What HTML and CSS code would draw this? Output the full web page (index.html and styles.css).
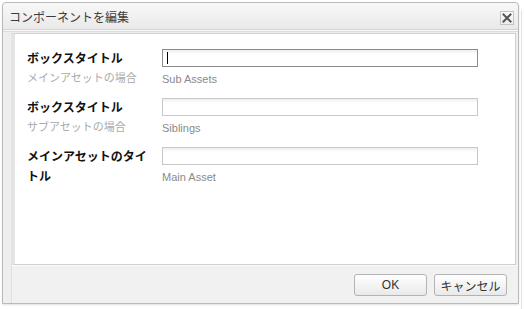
FILE: index.html
```html
<!DOCTYPE html>
<html lang="ja">
<head>
    <meta charset="UTF-8">
    <meta name="viewport" content="width=device-width, initial-scale=1.0">
    <title>コンポーネントを編集</title>
    <link rel="stylesheet" href="styles.css">
</head>
<body>
    <div class="page">
        <!-- Finestra di dialogo -->
        <div class="window">
            <div class="titlebar">
                <span class="title">コンポーネントを編集</span>
                <span class="close">
                    <svg width="10" height="10" viewBox="0 0 10 10">
                        <path d="M1.5 1.5 L8.5 8.5 M8.5 1.5 L1.5 8.5" stroke="#555" stroke-width="2" stroke-linecap="square"/>
                    </svg>
                </span>
            </div>

            <!-- Pannello con i campi -->
            <div class="panel">
                <div class="field">
                    <div class="field-label">
                        <div class="label">ボックスタイトル</div>
                        <div class="sublabel">メインアセットの場合</div>
                    </div>
                    <div class="field-input">
                        <div class="text-field focused"><span class="caret"></span></div>
                        <div class="hint">Sub Assets</div>
                    </div>
                </div>
                <div class="field">
                    <div class="field-label">
                        <div class="label">ボックスタイトル</div>
                        <div class="sublabel">サブアセットの場合</div>
                    </div>
                    <div class="field-input">
                        <div class="text-field"></div>
                        <div class="hint">Siblings</div>
                    </div>
                </div>
                <div class="field">
                    <div class="field-label">
                        <div class="label">メインアセットのタイトル</div>
                    </div>
                    <div class="field-input">
                        <div class="text-field"></div>
                        <div class="hint">Main Asset</div>
                    </div>
                </div>
            </div>

            <!-- Footer con i bottoni -->
            <div class="footer">
                <button class="btn">OK</button>
                <button class="btn">キャンセル</button>
            </div>
        </div>
        <div class="edge"></div>
    </div>
</body>
</html>
```

FILE: styles.css
```css
:root {
    --font-family: "Liberation Sans", "Noto Sans CJK JP", sans-serif;
    --frame-border: #b9b9b9;
    --panel-border: #d0d0d0;
    --frame-bg: #eeeeee;
    --hint-color: #8a8a8a;
}

* {
    margin: 0;
    padding: 0;
    box-sizing: border-box;
}

body {
    background-color: #ffffff;
    font-family: var(--font-family);
    width: 525px;
    height: 309px;
    overflow: hidden;
}

.page {
    display: flex;
    padding: 2px 0 0 2px;
}

.window {
    width: 517px;
    height: 302px;
    border: 1px solid var(--frame-border);
    border-radius: 4px 4px 0 0;
    background-color: var(--frame-bg);
    display: flex;
    flex-direction: column;
    box-shadow: 0 1px 2px rgba(0, 0, 0, 0.12);
}

.edge {
    width: 1px;
    height: 300px;
    margin: 8px 0 0 2px;
    background-color: #e2e2e2;
}

.titlebar {
    height: 27px;
    display: flex;
    align-items: center;
    justify-content: space-between;
    padding: 0 4px 0 6px;
    background: linear-gradient(#f8f8f8, #e9e9e9);
    border-bottom: 1px solid #d4d4d4;
    box-shadow: 0 1px 0 #f8f8f8, 0 2px 0 #dcdcdc;
    border-radius: 4px 4px 0 0;
}

.title {
    font-size: 12px;
    color: #3c3c3c;
    padding-top: 1px;
}

.close {
    width: 14px;
    height: 14px;
    border: 1px solid #c4c4c4;
    background: linear-gradient(#fdfdfd, #ececec);
    display: flex;
    align-items: center;
    justify-content: center;
    margin-top: 3px;
}

.panel {
    height: 232px;
    margin: 3px 2px 0 8px;
    border: 1px solid var(--panel-border);
    border-left-width: 4px;
    border-left-color: #e4e4e4;
    background-color: #ffffff;
    padding: 15px 0 0 12px;
}

.field {
    display: grid;
    grid-template-columns: 125px 316px;
    column-gap: 10px;
    margin-bottom: 12px;
}

.label {
    font-size: 12px;
    font-weight: bold;
    line-height: 20px;
    color: #111;
}

.sublabel {
    font-size: 11px;
    line-height: 14px;
    margin-top: 2px;
    color: #aaaaaa;
}

.text-field {
    height: 18px;
    border: 1px solid #c8c8c8;
    background: linear-gradient(#eeeeee, #ffffff 4px);
    position: relative;
}

.text-field.focused {
    border-color: #8c8c8c;
}

.caret {
    position: absolute;
    left: 4px;
    top: 2px;
    width: 1px;
    height: 12px;
    background-color: #000;
}

.hint {
    font-size: 11px;
    line-height: 14px;
    margin-top: 5px;
    color: var(--hint-color);
}

.footer {
    flex: 1;
    margin: 0 0 0 8px;
    border-left: 1px solid #e0e0e0;
    border-top: 1px solid #fafafa;
    background-color: #f1f1f1;
    display: flex;
    justify-content: flex-end;
    align-items: center;
    gap: 7px;
    padding: 1px 11px 0 0;
}

.btn {
    width: 73px;
    height: 22px;
    border: 1px solid #b3b3b3;
    border-radius: 3px;
    background: linear-gradient(#ffffff, #e9e9e9);
    font-family: var(--font-family);
    font-size: 12px;
    color: #333;
    cursor: pointer;
}
```
